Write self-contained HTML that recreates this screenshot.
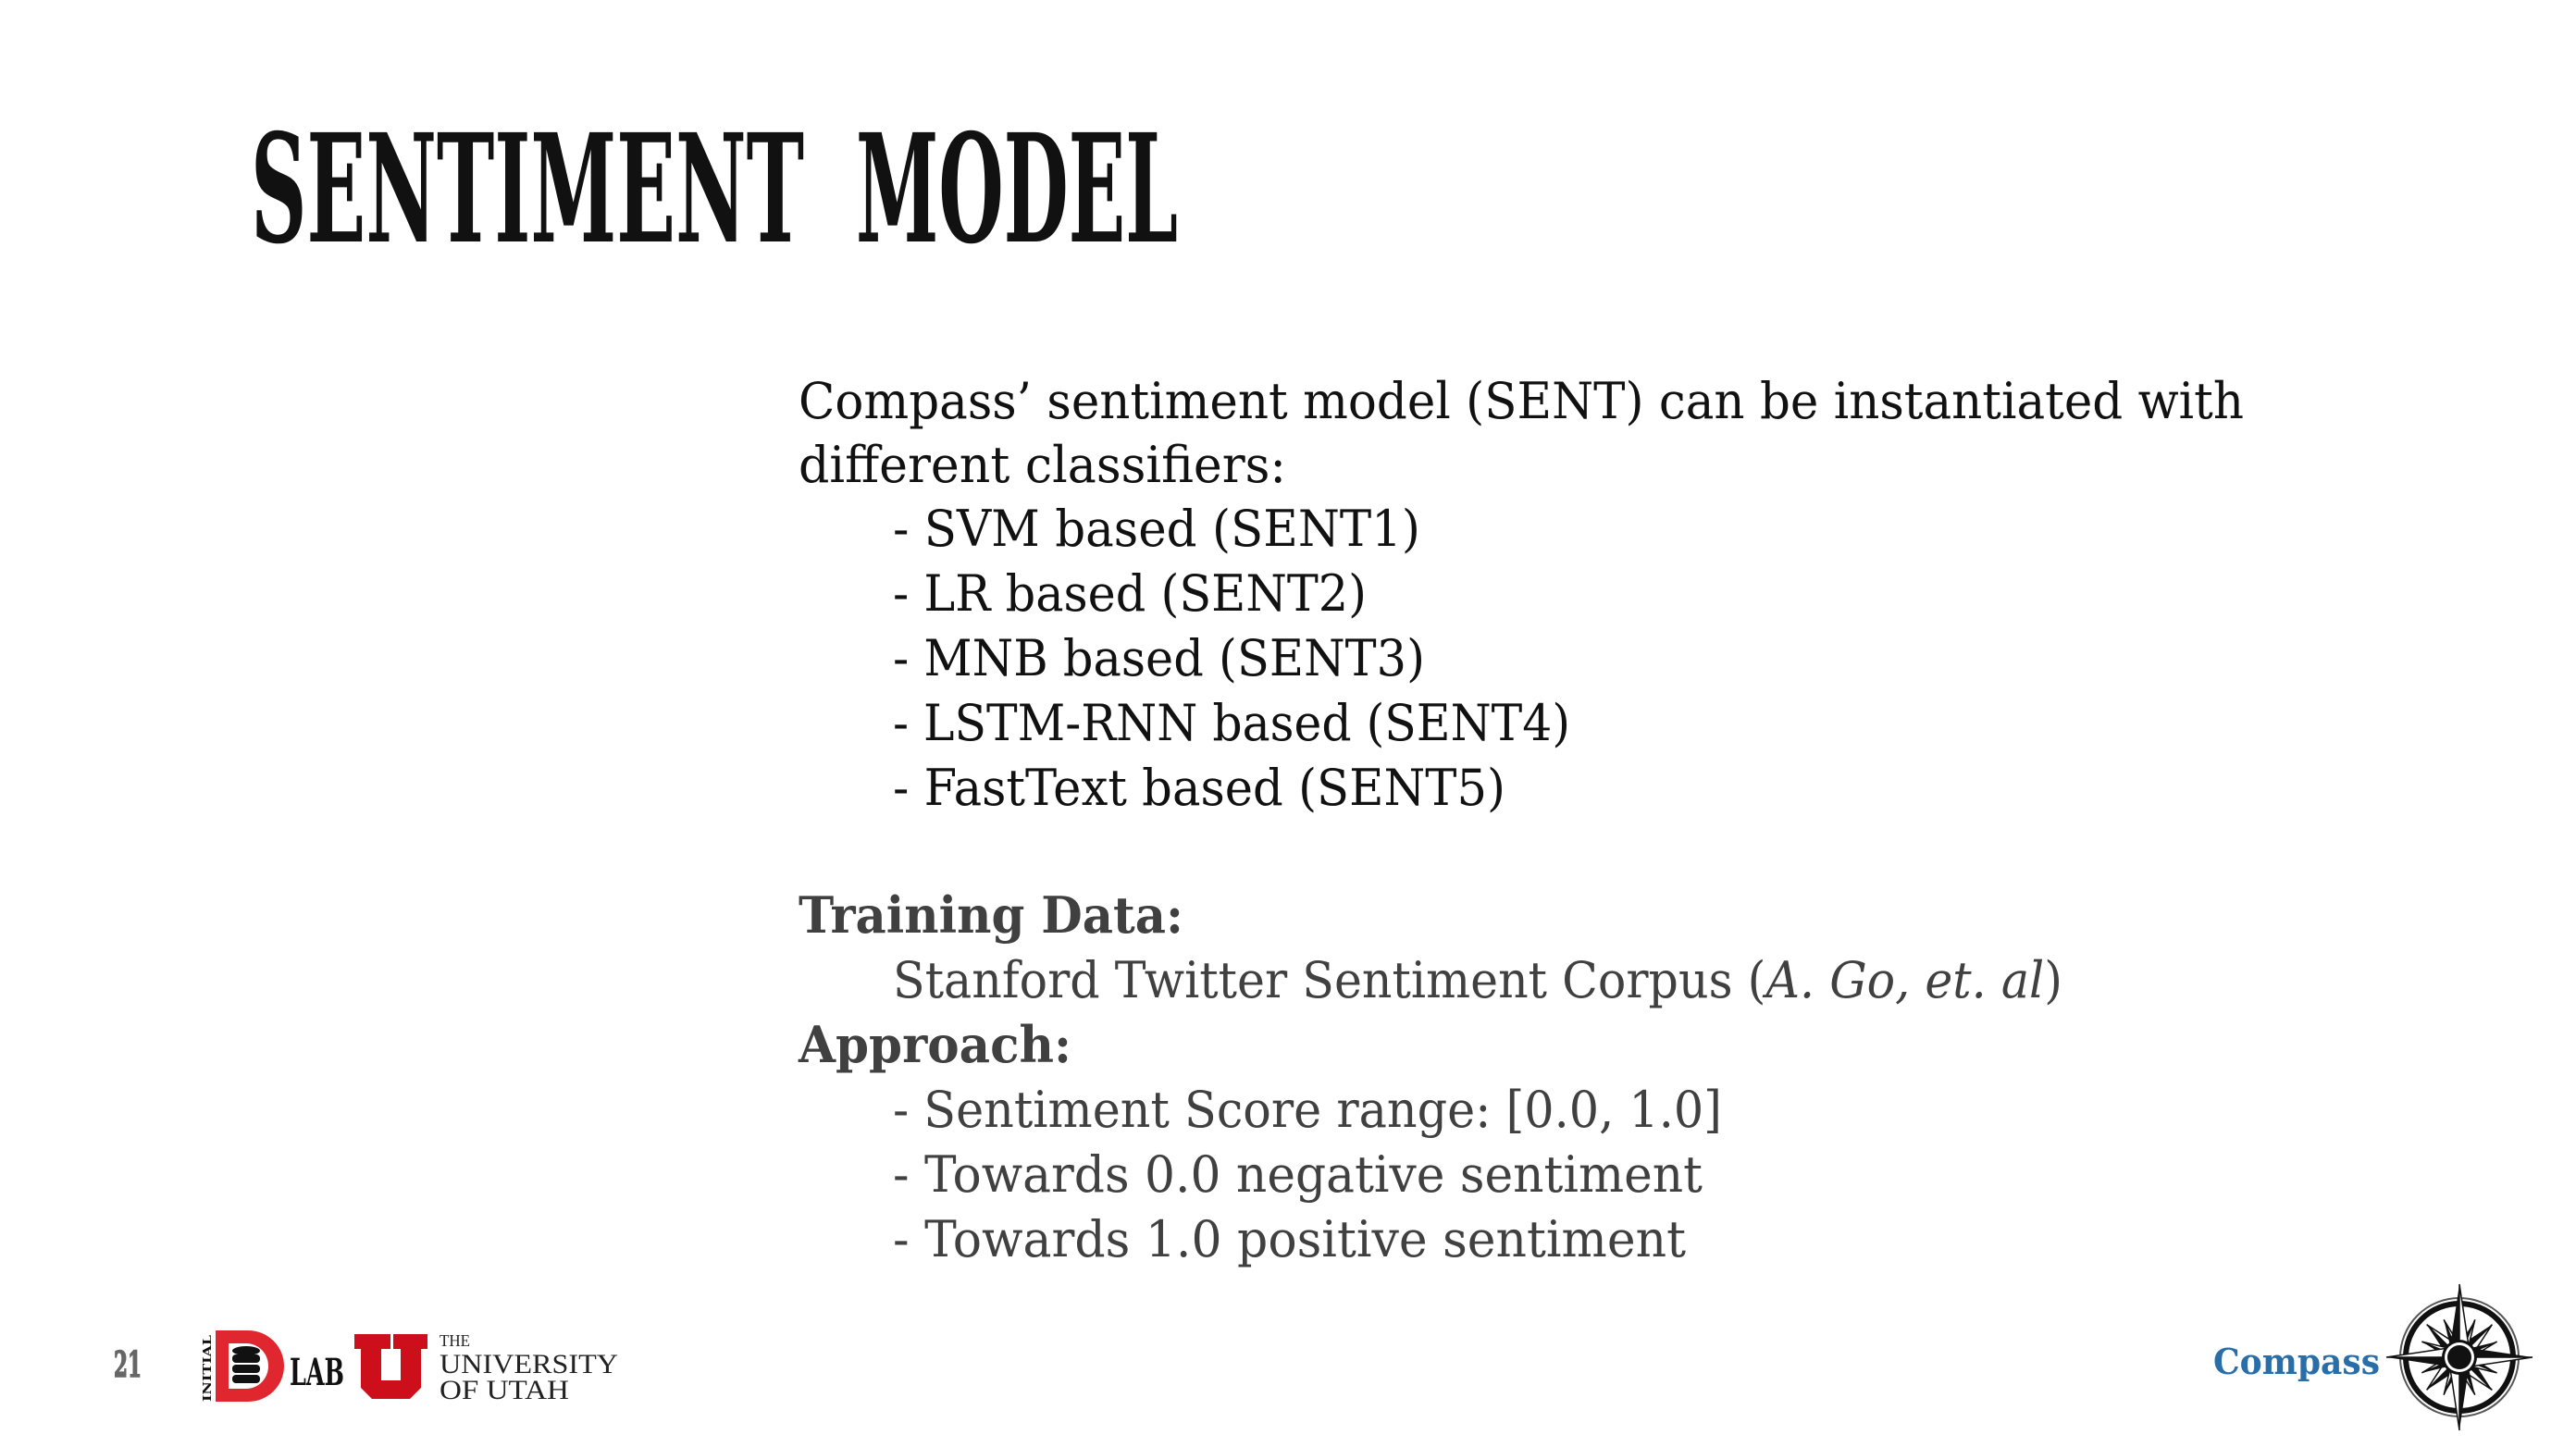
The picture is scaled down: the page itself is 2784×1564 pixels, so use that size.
<!DOCTYPE html>
<html><head><meta charset="utf-8"><style>
html,body{margin:0;padding:0;background:#fff;}
svg{display:block;}
</style></head><body>
<svg width="2784" height="1564" viewBox="0 0 2784 1564" xmlns="http://www.w3.org/2000/svg">
<rect width="2784" height="1564" fill="#fff"/>
<!-- Title -->
<g font-family="DejaVu Serif, serif" font-weight="bold" font-size="162" fill="#111">
<text x="271" y="261" textLength="598" lengthAdjust="spacingAndGlyphs">SENTIMENT</text>
<text x="925" y="261" textLength="348" lengthAdjust="spacingAndGlyphs">MODEL</text>
</g>

<g font-family="DejaVu Serif, serif" font-size="54" fill="#111">
<text x="863" y="452" textLength="1562" lengthAdjust="spacingAndGlyphs">Compass’ sentiment model (SENT) can be instantiated with</text>
<text x="863" y="521" textLength="527" lengthAdjust="spacingAndGlyphs">different classifiers:</text>
<text x="965" y="590" textLength="570" lengthAdjust="spacingAndGlyphs">- SVM based (SENT1)</text>
<text x="965" y="660" textLength="512" lengthAdjust="spacingAndGlyphs">- LR based (SENT2)</text>
<text x="965" y="730" textLength="575" lengthAdjust="spacingAndGlyphs">- MNB based (SENT3)</text>
<text x="965" y="800" textLength="732" lengthAdjust="spacingAndGlyphs">- LSTM-RNN based (SENT4)</text>
<text x="965" y="870" textLength="662" lengthAdjust="spacingAndGlyphs">- FastText based (SENT5)</text>
</g>
<g font-family="DejaVu Serif, serif" font-size="54" fill="#404040">
<text x="863" y="1008" font-weight="bold" textLength="416" lengthAdjust="spacingAndGlyphs">Training Data:</text>
<text x="965" y="1078" textLength="1264" lengthAdjust="spacingAndGlyphs">Stanford Twitter Sentiment Corpus (<tspan font-style="italic">A. Go, et. al</tspan>)</text>
<text x="863" y="1148" font-weight="bold" textLength="295" lengthAdjust="spacingAndGlyphs">Approach:</text>
<text x="965" y="1218" textLength="896" lengthAdjust="spacingAndGlyphs">- Sentiment Score range: [0.0, 1.0]</text>
<text x="965" y="1288" textLength="875" lengthAdjust="spacingAndGlyphs">- Towards 0.0 negative sentiment</text>
<text x="965" y="1358" textLength="857" lengthAdjust="spacingAndGlyphs">- Towards 1.0 positive sentiment</text>
</g>

<!-- page number -->
<text x="123" y="1488" font-family="DejaVu Serif, serif" font-weight="bold" font-size="38" fill="#666" stroke="#666" stroke-width="1.5" textLength="30" lengthAdjust="spacingAndGlyphs">21</text>

<!-- Initial D Lab logo -->
<text transform="translate(228,1515) rotate(-90)" font-family="DejaVu Serif, serif" font-weight="bold" font-size="12" fill="#111" textLength="72" lengthAdjust="spacingAndGlyphs">INITIAL</text>
<path d="M233,1438 H268 A39,38.5 0 0 1 268,1515 H233 Z M247,1452 V1501 H266 A24,24.5 0 0 0 266,1452 Z" fill="#e0272f" fill-rule="evenodd"/>
<g fill="#111">
<ellipse cx="266" cy="1460" rx="15" ry="5"/>
<rect x="251" y="1464" width="30" height="9" rx="4"/>
<rect x="251" y="1475" width="30" height="9" rx="4"/>
<rect x="251" y="1486" width="30" height="9" rx="4"/>
</g>
<text x="313" y="1497" font-family="DejaVu Serif, serif" font-weight="bold" font-size="40" fill="#111" textLength="59" lengthAdjust="spacingAndGlyphs">LAB</text>

<!-- U logo -->
<polygon fill="#cc0f1b" points="383,1442 422,1442 422,1458 412,1458 412,1492 433,1492 433,1458 425,1458 425,1442 462,1442 462,1458 455,1458 455,1500 443,1512 402,1512 390,1500 390,1458 383,1458"/>
<g font-family="Liberation Serif, serif" fill="#222">
<text x="475" y="1455" font-size="18" textLength="33" lengthAdjust="spacingAndGlyphs">THE</text>
<text x="475" y="1484" font-size="30" textLength="193" lengthAdjust="spacingAndGlyphs">UNIVERSITY</text>
<text x="475" y="1512" font-size="30" textLength="140" lengthAdjust="spacingAndGlyphs">OF UTAH</text>
</g>

<!-- Compass text -->
<text x="2392" y="1485" font-family="DejaVu Serif, serif" font-weight="bold" font-size="38" fill="#2a6ea8" textLength="180" lengthAdjust="spacingAndGlyphs">Compass</text>

<!-- Compass rose -->
<g transform="translate(2658,1467)">
<circle r="64" fill="none" stroke="#555" stroke-width="2"/>
<circle r="58" fill="none" stroke="#111" stroke-width="6"/>
<g transform="rotate(45)"><polygon points="0,-50 -8,-12 0,0" fill="#111"/><polygon points="0,-50 8,-12 0,0" fill="#fff" stroke="#111" stroke-width="1.5"/></g>
<g transform="rotate(135)"><polygon points="0,-50 -8,-12 0,0" fill="#111"/><polygon points="0,-50 8,-12 0,0" fill="#fff" stroke="#111" stroke-width="1.5"/></g>
<g transform="rotate(225)"><polygon points="0,-50 -8,-12 0,0" fill="#111"/><polygon points="0,-50 8,-12 0,0" fill="#fff" stroke="#111" stroke-width="1.5"/></g>
<g transform="rotate(315)"><polygon points="0,-50 -8,-12 0,0" fill="#111"/><polygon points="0,-50 8,-12 0,0" fill="#fff" stroke="#111" stroke-width="1.5"/></g>
<g transform="rotate(22.5)"><polygon points="0,-44 -5,-12 0,0" fill="#111"/><polygon points="0,-44 5,-12 0,0" fill="#fff" stroke="#111" stroke-width="1.5"/></g>
<g transform="rotate(67.5)"><polygon points="0,-44 -5,-12 0,0" fill="#111"/><polygon points="0,-44 5,-12 0,0" fill="#fff" stroke="#111" stroke-width="1.5"/></g>
<g transform="rotate(112.5)"><polygon points="0,-44 -5,-12 0,0" fill="#111"/><polygon points="0,-44 5,-12 0,0" fill="#fff" stroke="#111" stroke-width="1.5"/></g>
<g transform="rotate(157.5)"><polygon points="0,-44 -5,-12 0,0" fill="#111"/><polygon points="0,-44 5,-12 0,0" fill="#fff" stroke="#111" stroke-width="1.5"/></g>
<g transform="rotate(202.5)"><polygon points="0,-44 -5,-12 0,0" fill="#111"/><polygon points="0,-44 5,-12 0,0" fill="#fff" stroke="#111" stroke-width="1.5"/></g>
<g transform="rotate(247.5)"><polygon points="0,-44 -5,-12 0,0" fill="#111"/><polygon points="0,-44 5,-12 0,0" fill="#fff" stroke="#111" stroke-width="1.5"/></g>
<g transform="rotate(292.5)"><polygon points="0,-44 -5,-12 0,0" fill="#111"/><polygon points="0,-44 5,-12 0,0" fill="#fff" stroke="#111" stroke-width="1.5"/></g>
<g transform="rotate(337.5)"><polygon points="0,-44 -5,-12 0,0" fill="#111"/><polygon points="0,-44 5,-12 0,0" fill="#fff" stroke="#111" stroke-width="1.5"/></g>
<g transform="rotate(0)"><polygon points="0,-79 -10,-12 0,0" fill="#111"/><polygon points="0,-79 10,-12 0,0" fill="#fff" stroke="#111" stroke-width="1.5"/></g>
<g transform="rotate(90)"><polygon points="0,-79 -10,-12 0,0" fill="#111"/><polygon points="0,-79 10,-12 0,0" fill="#fff" stroke="#111" stroke-width="1.5"/></g>
<g transform="rotate(180)"><polygon points="0,-79 -10,-12 0,0" fill="#111"/><polygon points="0,-79 10,-12 0,0" fill="#fff" stroke="#111" stroke-width="1.5"/></g>
<g transform="rotate(270)"><polygon points="0,-79 -10,-12 0,0" fill="#111"/><polygon points="0,-79 10,-12 0,0" fill="#fff" stroke="#111" stroke-width="1.5"/></g>
<circle r="19" fill="#111"/>
<circle r="16" fill="#fff"/>
<circle r="13" fill="#111"/>
</g>
</svg>
</body></html>
